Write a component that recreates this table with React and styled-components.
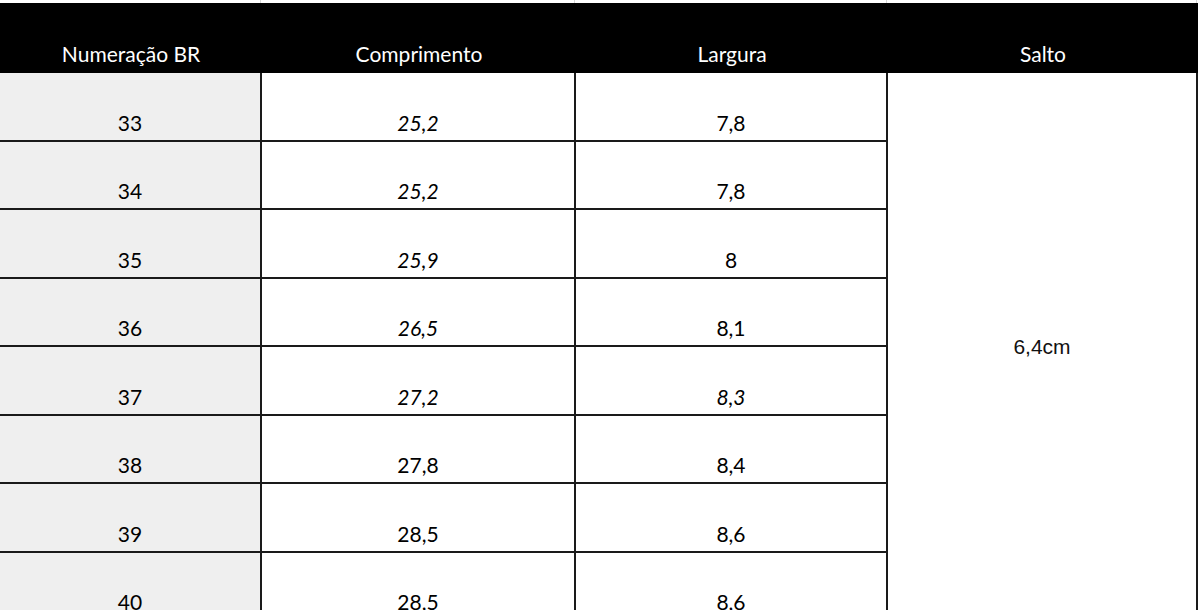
import React from 'react';
import styled, { createGlobalStyle } from 'styled-components';

const GlobalStyle = createGlobalStyle`
	html, body {
		margin: 0;
		padding: 0;
		background: #ffffff;
		overflow: hidden;
	}
`;

const columns = ['262px', '314px', '312px', '310px'];

const headers = ['Numeração BR', 'Comprimento', 'Largura', 'Salto'];

const rows = [
	{ size: '33', length: '25,2', width: '7,8', lengthItalic: true },
	{ size: '34', length: '25,2', width: '7,8', lengthItalic: true },
	{ size: '35', length: '25,9', width: '8', lengthItalic: true },
	{ size: '36', length: '26,5', width: '8,1', lengthItalic: true },
	{ size: '37', length: '27,2', width: '8,3', lengthItalic: true, widthItalic: true },
	{ size: '38', length: '27,8', width: '8,4' },
	{ size: '39', length: '28,5', width: '8,6' },
	{ size: '40', length: '28,5', width: '8,6' },
];

const Sheet = styled.div`
	width: 1200px;
	font-family: Lato, 'Open Sans', sans-serif;
	color: #000;
`;

const Gridlines = styled.div`
	display: grid;
	grid-template-columns: ${columns.join(' ')};
	height: 3px;
`;

const Gridline = styled.div`
	border-right: 1px solid #d6d6d6;
	margin-right: 1px;
`;

const Table = styled.div`
	display: grid;
	grid-template-columns: ${columns.join(' ')};
	grid-template-rows: 70px repeat(8, 68.5px);
`;

const HeadCell = styled.div`
	display: flex;
	align-items: flex-end;
	justify-content: center;
	background: #000;
	color: #fff;
	font-size: 21px;
	line-height: 21px;
	padding-bottom: 9px;
	box-sizing: border-box;
`;

const Cell = styled.div`
	display: flex;
	align-items: flex-end;
	justify-content: center;
	box-sizing: border-box;
	background: ${(p) => (p.$shade ? '#efefef' : '#fff')};
	border-right: 2px solid #1a1a1a;
	border-bottom: 2px solid #1a1a1a;
	font-size: 21px;
	line-height: 21px;
	font-style: ${(p) => (p.$italic ? 'italic' : 'normal')};
	padding-bottom: 7px;
`;

const MergedCell = styled.div`
	grid-column: 4;
	grid-row: 2 / span 8;
	display: flex;
	align-items: center;
	justify-content: center;
	border-right: 2px solid #1a1a1a;
	font-family: 'Liberation Sans', Arial, sans-serif;
	font-size: 21px;
	color: #111;
`;

export default function App() {
	return (
		<Sheet>
			<GlobalStyle />
			<Gridlines>
				{columns.map((c, i) => (
					<Gridline key={i} />
				))}
			</Gridlines>
			<Table>
				{headers.map((h) => (
					<HeadCell key={h}>{h}</HeadCell>
				))}
				{rows.map((r, i) => (
					<React.Fragment key={r.size}>
						<Cell $shade style={{ gridRow: i + 2, gridColumn: 1 }}>
							{r.size}
						</Cell>
						<Cell $italic={r.lengthItalic} style={{ gridRow: i + 2, gridColumn: 2 }}>
							{r.length}
						</Cell>
						<Cell $italic={r.widthItalic} style={{ gridRow: i + 2, gridColumn: 3 }}>
							{r.width}
						</Cell>
					</React.Fragment>
				))}
				<MergedCell>6,4cm</MergedCell>
			</Table>
		</Sheet>
	);
}
